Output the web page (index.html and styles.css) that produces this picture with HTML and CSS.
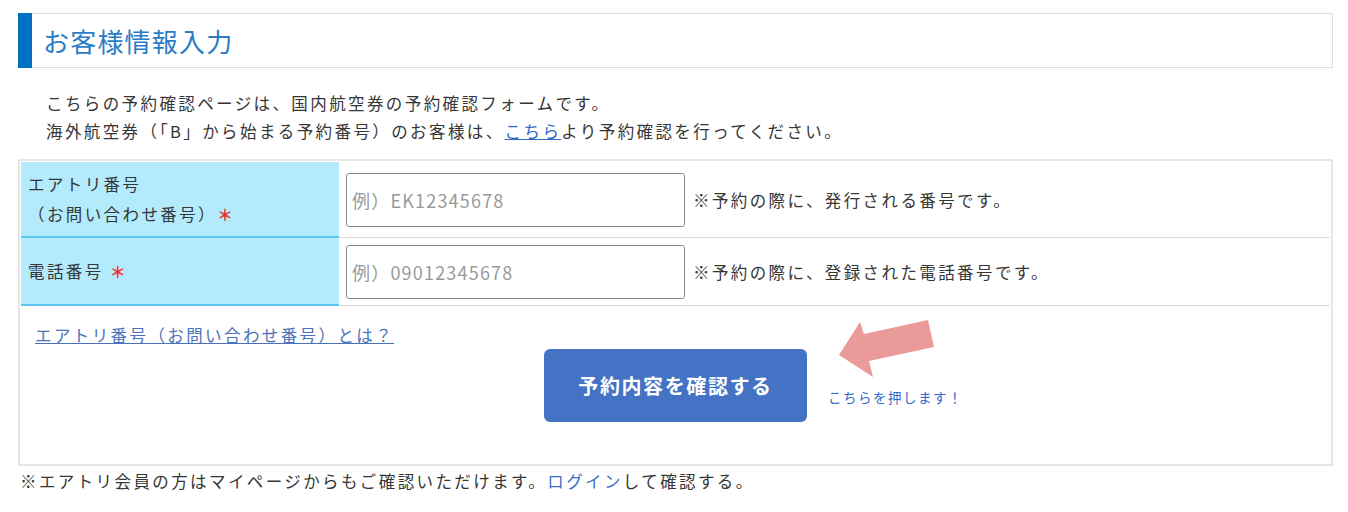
FILE: index.html
```html
<!DOCTYPE html>
<html lang="ja">
<head>
<meta charset="utf-8">
<title>お客様情報入力</title>
<link rel="stylesheet" href="styles.css">
</head>
<body>
<div class="page">
  <div class="head">
    <div class="head-bar"></div>
    <h1 class="head-title">お客様情報入力</h1>
  </div>
  <div class="intro">
    <p class="intro-line">こちらの予約確認ページは、国内航空券の予約確認フォームです。</p>
    <p class="intro-line">海外航空券（「B」から始まる予約番号）のお客様は、<a class="intro-link" href="#">こちら</a>より予約確認を行ってください。</p>
  </div>
  <div class="form">
    <div class="row row-first">
      <div class="row-label">
        <span>エアトリ番号</span>
        <span>（お問い合わせ番号）<span class="req">＊</span></span>
      </div>
      <div class="row-field">
        <input class="field-input" type="text" placeholder="例）EK12345678">
        <span class="note">※予約の際に、発行される番号です。</span>
      </div>
    </div>
    <div class="row row-second">
      <div class="row-label">
        <span>電話番号 <span class="req">＊</span></span>
      </div>
      <div class="row-field">
        <input class="field-input" type="text" placeholder="例）09012345678">
        <span class="note">※予約の際に、登録された電話番号です。</span>
      </div>
    </div>
    <div class="bottom">
      <a class="what-link" href="#">エアトリ番号（お問い合わせ番号）とは？</a>
      <div class="actions">
        <div class="btn-wrap">
          <button class="submit" type="button">予約内容を確認する</button>
          <svg class="arrow" width="98" height="60" viewBox="0 0 98 60">
            <polygon points="1,36 22,3 26,15 90,1 96,28 31,42 35,58" fill="#ea9a98"/>
          </svg>
          <span class="hint">こちらを押します！</span>
        </div>
      </div>
    </div>
  </div>
  <p class="foot">※エアトリ会員の方はマイページからもご確認いただけます。<a class="foot-link" href="#">ログイン</a>して確認する。</p>
</div>
</body>
</html>
```
FILE: styles.css
```css
html, body {
  margin: 0;
  padding: 0;
  background: #fff;
}
body {
  font-family: "Noto Sans CJK JP", "Noto Sans", sans-serif;
  font-size: 16.5px;
  letter-spacing: 2.4px;
  color: #363636;
}
.page {
  padding: 13px 15px 0 18px;
}
.head {
  display: flex;
  align-items: center;
  height: 55px;
  box-sizing: border-box;
  border: 1px solid #dedede;
  border-left: none;
}
.head-bar {
  width: 14px;
  align-self: stretch;
  margin: -1px 0;
  background: #0070c0;
}
.head-title {
  margin: 0 0 0 11px;
  font-size: 26px;
  font-weight: normal;
  letter-spacing: 1.2px;
  color: #2a7cc7;
}
.intro {
  margin: 21px 0 14px 28px;
}
.intro-line {
  margin: 0;
  line-height: 28px;
}
.intro-link {
  color: #2f68c0;
  text-decoration: underline;
}
.form {
  border: 2px solid #e6e6e6;
  padding: 1px 1px 0 1px;
}
.row {
  display: flex;
}
.row-first {
  height: 76px;
}
.row-second {
  height: 68px;
}
.row-label {
  width: 318px;
  box-sizing: border-box;
  background: #b3ebfc;
  border-bottom: 2px solid #5bc6ef;
  padding-left: 7px;
  display: flex;
  flex-direction: column;
  justify-content: center;
  line-height: 30px;
}
.req {
  color: #f03030;
  font-size: 16px;
  font-weight: bold;
}
.row-field {
  flex: 1;
  display: flex;
  align-items: center;
  padding-left: 7px;
  border-bottom: 1px solid #dcdcdc;
}
.field-input {
  width: 339px;
  height: 54px;
  box-sizing: border-box;
  border: 1px solid #8a8a8a;
  border-radius: 3px;
  padding: 0 5px;
  font-family: inherit;
  font-size: 18px;
  letter-spacing: 1.2px;
  color: #333;
  background: #fff;
}
.field-input::placeholder {
  color: #9a9a9a;
}
.note {
  margin-left: 8px;
}
.bottom {
  height: 158px;
  box-sizing: border-box;
  padding: 15px 0 0 14px;
}
.what-link {
  display: block;
  line-height: 28px;
  color: #4b72b8;
  text-decoration: underline;
}
.actions {
  display: flex;
  justify-content: center;
  padding-right: 14px;
}
.btn-wrap {
  position: relative;
}
.submit {
  display: block;
  width: 263px;
  height: 73px;
  border: none;
  border-radius: 6px;
  background: #4472c4;
  color: #fff;
  font-family: inherit;
  font-size: 20px;
  font-weight: bold;
  letter-spacing: 1.6px;
}
.arrow {
  position: absolute;
  left: 294px;
  top: -30px;
}
.hint {
  position: absolute;
  left: 284px;
  top: 38px;
  line-height: 20px;
  font-size: 13.5px;
  letter-spacing: 1.5px;
  white-space: nowrap;
  color: #2f6bcc;
}
.foot {
  margin: 0;
  padding-left: 2px;
  line-height: 30px;
}
.foot-link {
  color: #3a6fc4;
  text-decoration: none;
}
```
